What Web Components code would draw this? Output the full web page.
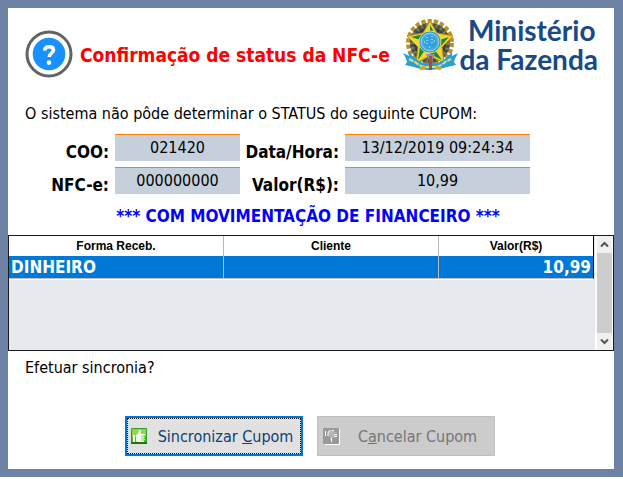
<!DOCTYPE html>
<html lang="pt-BR">
<head>
<meta charset="utf-8">
<title>Confirmação de status da NFC-e</title>
<style>
    html{
        background:#fff;
    }
    body{
        margin:0;
        color:#000;
        font-family:"DejaVu Sans Condensed", "Noto Sans", sans-serif;
        font-size:16px;
        line-height:20px;
        --frame:#6e82a6;
        --field:#c5d0dc;
        --orange:#ff8000;
        --select:#0078d7;
        --strong-size:17px;
    }
    p{
        margin:0;
    }
    .question{
        padding:19px 17px 0;
    }
    .notice{
        padding:12px 6px 9px 0;
        color:#00f;
        font-size:var(--strong-size);
        font-weight:bold;
        text-align:center;
    }
    .prompt{
        padding:7px 17px 38px;
    }
    .actions{
        display:flex;
        justify-content:center;
        gap:14px;
        padding:0 2px 13px 0;
    }
</style>
</head>
<body>
<dialog-frame>
    <dialog-header>
        Confirmação de status da NFC-e
        <ministry-logo slot="logo"></ministry-logo>
    </dialog-header>
    <p class="question">O sistema não pôde determinar o STATUS do seguinte CUPOM:</p>
    <field-grid>
        <read-field label="COO:" value="021420"></read-field>
        <read-field label="Data/Hora:" value="13/12/2019 09:24:34"></read-field>
        <read-field label="NFC-e:" value="000000000"></read-field>
        <read-field label="Valor(R$):" value="10,99"></read-field>
    </field-grid>
    <p class="notice">*** COM MOVIMENTAÇÃO DE FINANCEIRO ***</p>
    <payment-grid></payment-grid>
    <p class="prompt">Efetuar sincronia?</p>
    <div class="actions">
        <action-button icon="up">Sincronizar <u>C</u>upom</action-button>
        <action-button icon="down" disabled>C<u>a</u>ncelar Cupom</action-button>
    </div>
</dialog-frame>

<script>
function makeTemplate(html){
    const template = document.createElement('template');
    template.innerHTML = html;
    return template;
}

class BaseElement extends HTMLElement{
    constructor(){
        super();
        this.attachShadow({mode: 'open'});
        this.shadowRoot.appendChild(this.constructor.template.content.cloneNode(true));
    }
}

class DialogFrame extends BaseElement{
    static template = makeTemplate(`
        <style>
            :host{
                display:block;
                background:#fff;
                border:8px solid var(--frame);
                border-right-width:9px;
            }
        </style>
        <slot></slot>
    `);
}

class DialogHeader extends BaseElement{
    static template = makeTemplate(`
        <style>
            :host{
                display:flex;
                align-items:center;
                gap:7px;
                height:77px;
                padding:0 16px 0 17px;
            }
            .icon{
                flex:none;
                width:48px;
                height:48px;
                padding-top:14px;
            }
            h1{
                flex:1;
                margin:0;
                padding-top:16px;
                color:#f00;
                font-size:19px;
                line-height:24px;
                white-space:nowrap;
            }
        </style>
        <svg class="icon" viewBox="0 0 48 48" aria-hidden="true">
            <circle cx="24" cy="24" r="22" fill="#fff" stroke="#636363" stroke-width="3"/>
            <circle cx="24" cy="24" r="16.3" fill="#1890ff"/>
            <path d="M19.6 20.6c.2-3 2.200-3.900 4.400-3.900 2.500 0 4.500 1.200 4.500 3.600 0 3-4.300 2.700-4.300 6.700" fill="none" stroke="#fff" stroke-width="3.600"/>
            <circle cx="24" cy="32.600" r="2.300" fill="#fff"/>
        </svg>
        <h1><slot></slot></h1>
        <slot name="logo"></slot>
    `);
}

class MinistryLogo extends BaseElement{
    static template = makeTemplate(`
        <style>
            :host{
                display:flex;
                align-items:center;
                color:#174a86;
                font-family:Lato, "Open Sans", sans-serif;
                font-size:28px;
                font-weight:bold;
                line-height:29px;
                text-align:center;
            }
            svg{
                flex:none;
                width:56px;
                height:56px;
            }
            .name{
                padding-bottom:4px;
            }
            .first{
                padding-left:6px;
            }
        </style>
        <svg viewBox="0 0 56 56" aria-hidden="true">
            <circle cx="27" cy="24" r="21" fill="none" stroke="#b8912c" stroke-width="6" stroke-dasharray="4 2"/>
            <circle cx="27" cy="24" r="20" fill="#4b5048"/>
            <circle cx="27" cy="24" r="18" fill="none" stroke="#76805a" stroke-width="4" stroke-dasharray="2 3"/>
            <circle cx="27" cy="24" r="14" fill="none" stroke="#2c3b3a" stroke-width="4" stroke-dasharray="3 1"/>
            <path d="M27 2l7 12 16 3-11 11 2 16-14-7-14 7 2-16L4 17l16-3z" fill="#f7d52c" stroke="#b98d16"/>
            <path d="M27 6v16l5-7zM46 18L27 24l10 4zM39 41L27 24v11zM15 41l12-17-10 4zM8 18l19 6-6-9z" fill="#168943"/>
            <circle cx="27" cy="23" r="11" fill="#2390cc" stroke="#f0d95a"/>
            <circle cx="27" cy="23" r="9" fill="#47b0e2" stroke="#9fdcf2"/>
            <circle cx="27" cy="23" r="7" fill="#35a2dc"/>
            <path d="M24 18v8M29 17v9M21 23h3M31 22h2M26 28h2" stroke="#e8faff" stroke-dasharray="1 2"/>
            <path d="M23 35h9l-2 5h-5z" fill="#8e8fa8"/>
            <path d="M0 34l6 3-1-4 7 6q5 5 11 5h9q6 0 11-5l6-6v4l6-3q-3 5-4 9l2 3-9 2q-8 3-17 3t-16-3l-9-2 2-3q-1-4-4-9z" fill="#2a9fda"/>
            <path d="M6 40l6 3q6 5 12 5h7q6 0 11-5l6-3" fill="none" stroke="#dfe06a" stroke-width="2" stroke-dasharray="5 1"/>
            <path d="M26 37h3v14h-3z" fill="#bb4634"/>
            <path d="M17 50l5-2M38 50l-5-2" fill="none" stroke="#d0a91d" stroke-width="3"/>
        </svg>
        <div class="name"><div class="first">Ministério</div><div>da Fazenda</div></div>
    `);
}

class FieldGrid extends BaseElement{
    static template = makeTemplate(`
        <style>
            :host{
                display:grid;
                grid-template-columns:84px 25fr 93px 37fr;
                gap:6px;
                padding:10px 84px 0 17px;
            }
        </style>
        <slot></slot>
    `);
}

// label and input take two neighbouring cells of the field-grid
class ReadField extends BaseElement{
    static template = makeTemplate(`
        <style>
            :host{
                display:contents;
            }
            label{
                align-self:end;
                justify-self:end;
                font-size:var(--strong-size);
                font-weight:bold;
                line-height:18px;
                white-space:nowrap;
            }
            input{
                box-sizing:border-box;
                width:100%;
                height:27px;
                min-width:0;
                margin:0;
                padding:0 0 1px;
                border:0;
                border-top:1px solid var(--orange);
                background:var(--field);
                color:inherit;
                font:inherit;
                text-align:center;
                outline:none;
            }
        </style>
        <label for="field"></label>
        <input id="field" type="text" readonly>
    `);

    connectedCallback(){
        this.shadowRoot.querySelector('label').textContent = this.getAttribute('label');
        this.shadowRoot.querySelector('input').value = this.getAttribute('value');
    }
}

class PaymentGrid extends BaseElement{
    static template = makeTemplate(`
        <style>
            :host{
                display:flex;
                min-height:114px;
                border:1px solid #1a1a1a;
                background:#e6eaef;
            }
            .rows{
                flex:1;
            }
            table{
                width:100%;
                table-layout:fixed;
                border-collapse:separate;
                border-spacing:0;
                border-bottom:1px solid #fff;
            }
            th, td{
                box-sizing:border-box;
                border-right:1px solid #b8b8b8;
                font-weight:bold;
            }
            th{
                height:20px;
                padding:0;
                background:#fff;
                font-family:"Liberation Sans", Arial, sans-serif;
                font-size:12px;
                line-height:20px;
            }
            td{
                height:23px;
                padding:0 2px;
                border-bottom:1px solid #c0c0c0;
                background:var(--select);
                color:#fff;
                font-size:var(--strong-size);
                line-height:22px;
            }
            th:nth-child(3), td:nth-child(3){
                width:155px;
                border-right-color:#000;
            }
            td:nth-child(3){
                text-align:right;
            }
        </style>
        <div class="rows">
            <table>
                <thead>
                    <tr><th>Forma Receb.</th><th>Cliente</th><th>Valor(R$)</th></tr>
                </thead>
                <tbody>
                    <tr><td>DINHEIRO</td><td></td><td>10,99</td></tr>
                </tbody>
            </table>
        </div>
        <scroll-strip></scroll-strip>
    `);
}

class ScrollStrip extends BaseElement{
    static template = makeTemplate(`
        <style>
            :host{
                display:flex;
                flex-direction:column;
                width:15px;
                border:solid #fff;
                border-width:0 1px 0 2px;
                margin-left:1px;
                background:#f0f0f0;
            }
            button{
                display:block;
                width:100%;
                height:17px;
                padding:0;
                border:0;
                background:none;
            }
            svg{
                display:block;
                margin:auto;
            }
            .thumb{
                flex:1;
                background:#cdcdcd;
            }
        </style>
        <button type="button" aria-label="Subir">
            <svg width="9" height="7"><path d="M1 5.500l3.500-3.500L8 5.500" fill="none" stroke="#555" stroke-width="2"/></svg>
        </button>
        <div class="thumb"></div>
        <button type="button" aria-label="Descer">
            <svg width="9" height="7"><path d="M1 1.500L4.500 5 8 1.500" fill="none" stroke="#555" stroke-width="2"/></svg>
        </button>
    `);
}

const icons = {
    up: `
        <rect width="16" height="16" rx="1" fill="#2f9e1e"/>
        <path d="M1 1h14v7q-7 3-14 1z" fill="#8fd64f"/>
        <path d="M1 9q7 2 14-1v6H1z" fill="#4fb82f"/>
        <path d="M2 7h2v7H2zM5 7l2-1 1-4h2v4h4v2h-1v1h1v1h-1v1h1v1h-1v2H6l-1-1z" fill="#f1ffe6"/>
        <path d="M10 8h4M10 10h4M10 12h4" stroke="#62bd3c" stroke-width=".7"/>
        <path d="M0 15h16" stroke="#187810" stroke-width="2"/>`,
    down: `
        <path d="M1 1h16v16H2" fill="#fff"/>
        <rect width="16" height="16" rx="1" fill="#999"/>
        <path d="M5 3q1-1 3-1h3v2h3v1h-3v2h3v1h-3v2H9v3H8l-1-4-2-1z" fill="#b5b5b5"/>
        <path d="M2.500 3v5M7.500 2.500Q4.500 3 5 8M9 2.500h2M11 6.500h3M11 8.500h3M8.500 10v4" fill="none" stroke="#fff"/>`
};

class ActionButton extends BaseElement{
    static template = makeTemplate(`
        <style>
            :host{
                display:block;
                flex:0 1 178px;
            }
            button{
                display:flex;
                align-items:center;
                gap:4px;
                box-sizing:border-box;
                width:100%;
                height:40px;
                padding:2px 3px 0 4px;
                border:2px solid var(--select);
                outline:1px dotted #000;
                outline-offset:-3px;
                background:#e1e1e1;
                color:#0b3f78;
                font:inherit;
                white-space:nowrap;
            }
            button:disabled{
                padding:2px 4px 0 5px;
                border:1px solid #bfbfbf;
                outline:none;
                background:#ccc;
                color:#767676;
            }
            svg{
                flex:none;
                width:18px;
                height:18px;
            }
            .text{
                flex:1;
                text-align:center;
            }
        </style>
        <button type="button">
            <svg viewBox="0 0 18 18" aria-hidden="true"></svg>
            <span class="text"><slot></slot></span>
        </button>
    `);

    connectedCallback(){
        this.shadowRoot.querySelector('svg').innerHTML = icons[this.getAttribute('icon')];
        this.shadowRoot.querySelector('button').disabled = this.hasAttribute('disabled');
    }
}

window.customElements.define('dialog-frame', DialogFrame);
window.customElements.define('dialog-header', DialogHeader);
window.customElements.define('ministry-logo', MinistryLogo);
window.customElements.define('field-grid', FieldGrid);
window.customElements.define('read-field', ReadField);
window.customElements.define('scroll-strip', ScrollStrip);
window.customElements.define('payment-grid', PaymentGrid);
window.customElements.define('action-button', ActionButton);
</script>
</body>
</html>
